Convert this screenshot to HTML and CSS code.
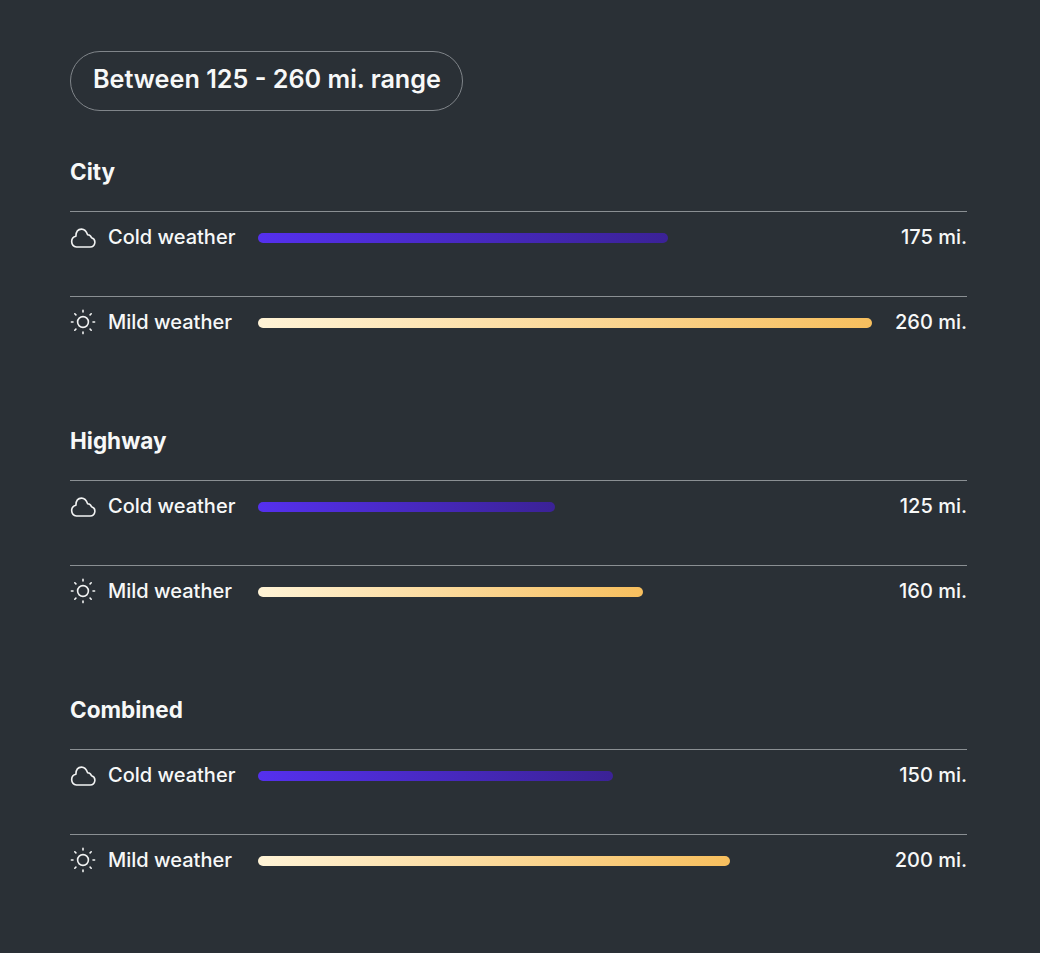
FILE: index.html
```html
<!DOCTYPE html>
<html lang="en">
<head>
<meta charset="utf-8">
<title>Range</title>
<link rel="stylesheet" href="styles.css">
</head>
<body>
<svg class="defs" width="0" height="0" aria-hidden="true">
  <symbol id="cloud" viewBox="0 0 26 20"><path d="M6.5 19H20.2a4.7 4.7 0 0 0 1.3-9.2C20.8 7.7 19 6.6 17.6 6.7 16.4 3.3 14 1.1 11.5 1.1 8.4 1.1 6 3.6 5.9 8.2A5.5 5.5 0 0 0 6.5 19z" fill="none" stroke="currentColor" stroke-width="1.6" stroke-linejoin="round"/></symbol>
  <symbol id="sun" viewBox="0 0 26 26"><circle cx="13" cy="13" r="5.4" fill="none" stroke="currentColor" stroke-width="1.6"/><path d="M13 1.4v1.6M13 23v1.6M1.4 13H3M23 13h1.6M4.8 4.8l1.1 1.1M20.1 20.1l1.1 1.1M4.8 21.2l1.1-1.1M20.1 5.9l1.1-1.1" stroke="currentColor" stroke-width="1.6" stroke-linecap="round"/></symbol>
</svg>
<main class="page">
  <div class="pill">Between 125 - 260 mi. range</div>

  <section class="group">
    <h2>City</h2>
    <div class="row"><svg class="icon cloud"><use href="#cloud"/></svg><span class="label">Cold weather</span><div class="track"><div class="bar cold" style="width:410px"></div></div><span class="value">175 mi.</span></div>
    <div class="row"><svg class="icon sun"><use href="#sun"/></svg><span class="label">Mild weather</span><div class="track"><div class="bar mild" style="width:614px"></div></div><span class="value">260 mi.</span></div>
  </section>

  <section class="group">
    <h2>Highway</h2>
    <div class="row"><svg class="icon cloud"><use href="#cloud"/></svg><span class="label">Cold weather</span><div class="track"><div class="bar cold" style="width:297px"></div></div><span class="value">125 mi.</span></div>
    <div class="row"><svg class="icon sun"><use href="#sun"/></svg><span class="label">Mild weather</span><div class="track"><div class="bar mild" style="width:385px"></div></div><span class="value">160 mi.</span></div>
  </section>

  <section class="group">
    <h2>Combined</h2>
    <div class="row"><svg class="icon cloud"><use href="#cloud"/></svg><span class="label">Cold weather</span><div class="track"><div class="bar cold" style="width:355px"></div></div><span class="value">150 mi.</span></div>
    <div class="row"><svg class="icon sun"><use href="#sun"/></svg><span class="label">Mild weather</span><div class="track"><div class="bar mild" style="width:472px"></div></div><span class="value">200 mi.</span></div>
  </section>
</main>
</body>
</html>
```

FILE: styles.css
```css
* { box-sizing: border-box; }
html, body { margin: 0; height: 100%; }
body {
  background: #2a3036;
  color: #f7f8f8;
  font-family: "Inter", "Liberation Sans", sans-serif;
  overflow: hidden;
}
.defs { position: absolute; }
.page { padding: 51px 73px 0 70px; }
.pill {
  display: flex;
  align-items: center;
  height: 60px;
  width: 393px;
  padding: 0 0 4px 22px;
  border: 1px solid #80858a;
  border-radius: 30px;
  font-size: 25.2px;
  font-weight: 600;
  white-space: nowrap;
}
.group { height: 269px; }
.group:first-of-type { margin-top: 44px; }
h2 {
  margin: 0;
  height: 56px;
  padding-top: 3px;
  font-size: 22.5px;
  line-height: 28px;
  font-weight: 700;
}
.row {
  display: flex;
  align-items: flex-start;
  height: 85px;
  border-top: 1px solid #8a8f93;
  padding-top: 15px;
  font-size: 20px;
  line-height: 20px;
  font-weight: 500;
}
.icon { flex: none; width: 26px; margin-right: 12px; color: #f2f3f3; }
.cloud { height: 20px; margin-top: 1px; }
.sun { height: 26px; margin-top: -3px; }
.label { width: 150px; flex: none; white-space: nowrap; }
.track { flex: 1; padding-top: 6px; }
.bar { height: 10px; border-radius: 5px; }
.cold { background: linear-gradient(90deg, #5530ee, #3b2296); }
.mild { background: linear-gradient(90deg, #fff3d6, #f7bf5e); }
.value { white-space: nowrap; margin-left: 4px; }
```
